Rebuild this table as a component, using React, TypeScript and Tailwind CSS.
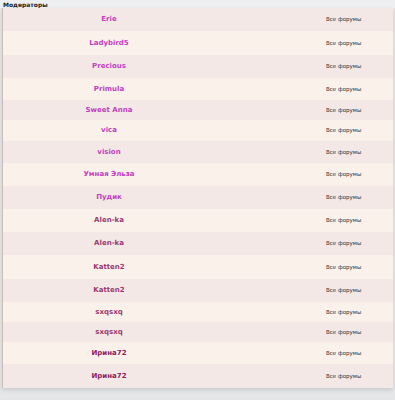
const rows = [
  { name: "Erie", h: "h-[23px]", color: "text-[#c23fbf]" },
  { name: "Ladybird5", h: "h-[24px]", color: "text-[#c23fbf]" },
  { name: "Precious", h: "h-[23px]", color: "text-[#c23fbf]" },
  { name: "Primula", h: "h-[22px]", color: "text-[#c23fbf]" },
  { name: "Sweet Anna", h: "h-[20px]", color: "text-[#c23fbf]" },
  { name: "vica", h: "h-[21px]", color: "text-[#c23fbf]" },
  { name: "vision", h: "h-[22px]", color: "text-[#c23fbf]" },
  { name: "Умная Эльза", h: "h-[23px]", color: "text-[#c23fbf]" },
  { name: "Пудик", h: "h-[23px]", color: "text-[#c23fbf]" },
  { name: "Alen-ka", h: "h-[23px]", color: "text-[#9b3a6f]" },
  { name: "Alen-ka", h: "h-[23px]", color: "text-[#9b3a6f]" },
  { name: "Katten2", h: "h-[24px]", color: "text-[#9b3a6f]" },
  { name: "Katten2", h: "h-[23px]", color: "text-[#9b3a6f]" },
  { name: "sxqsxq", h: "h-[20px]", color: "text-[#9b3a6f]" },
  { name: "sxqsxq", h: "h-[20px]", color: "text-[#9b3a6f]" },
  { name: "Ирина72", h: "h-[22px]", color: "text-[#8a2060]" },
  { name: "Ирина72", h: "h-[24px]", color: "text-[#8a2060]" },
];

export default function App() {
  return (
    <div className="w-[395px] h-[400px] overflow-hidden bg-[#e4e6e8] font-['DejaVu_Sans',sans-serif]">
      {/* header strip */}
      <div className="h-[8px] bg-[#eeeff1] flex items-end pl-[3px]">
        <span className="text-[6px] font-bold leading-[7px] text-[#222]">Модераторы</span>
      </div>

      {/* moderators table */}
      <div className="flex flex-col border-l border-[#c9bdb5] ml-[2px] mr-[2px] shadow-[0_2px_4px_rgba(0,0,0,0.12)]">
        {rows.map((r, i) => (
          <div
            key={i}
            className={`${r.h} grid grid-cols-[212px_1fr_102px] items-center ${
              i % 2 === 0 ? "bg-[#f3e8e5]" : "bg-[#faf1eb]"
            }`}
          >
            <span className={`text-center text-[7px] font-bold ${r.color}`}>{r.name}</span>
            <span />
            <span className="text-[5.5px] text-[#333] pl-[35px]">Все форумы</span>
          </div>
        ))}
      </div>
    </div>
  );
}
